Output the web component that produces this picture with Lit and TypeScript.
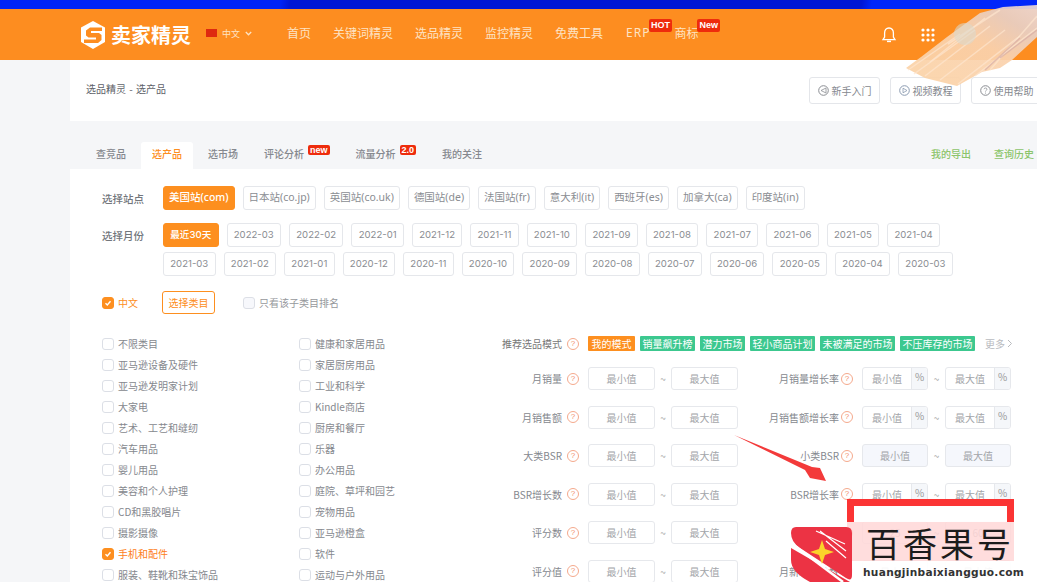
import { LitElement, html, svg, css, nothing } from "lit";
import { customElement } from "lit/decorators.js";

const NAV = ["首页", "关键词精灵", "选品精灵", "监控精灵", "免费工具"];
const TABS = ["查竞品", "选产品", "选市场"];
const SITES = ["美国站(com)", "日本站(co.jp)", "英国站(co.uk)", "德国站(de)", "法国站(fr)", "意大利(it)", "西班牙(es)", "加拿大(ca)", "印度站(in)"];
const MONTHS = ["最近30天", "2022-03", "2022-02", "2022-01", "2021-12", "2021-11", "2021-10", "2021-09", "2021-08", "2021-07", "2021-06", "2021-05", "2021-04", "2021-03", "2021-02", "2021-01", "2020-12", "2020-11", "2020-10", "2020-09", "2020-08", "2020-07", "2020-06", "2020-05", "2020-04", "2020-03"];
const CATS = ["不限类目", "健康和家居用品", "亚马逊设备及硬件", "家居厨房用品", "亚马逊发明家计划", "工业和科学", "大家电", "Kindle商店", "艺术、工艺和缝纫", "厨房和餐厅", "汽车用品", "乐器", "婴儿用品", "办公用品", "美容和个人护理", "庭院、草坪和园艺", "CD和黑胶唱片", "宠物用品", "摄影摄像", "亚马逊橙盒", "手机和配件", "软件", "服装、鞋靴和珠宝饰品", "运动与户外用品"];
const MODES = ["销量飙升榜", "潜力市场", "轻小商品计划", "未被满足的市场", "不压库存的市场"];
type Row = { l: string; r: string; kind: "pct" | "soft" | "plain"; a?: string; b?: string };
const ROWS: Row[] = [
  { l: "月销量", r: "月销量增长率", kind: "pct" },
  { l: "月销售额", r: "月销售额增长率", kind: "pct" },
  { l: "大类BSR", r: "小类BSR", kind: "soft" },
  { l: "BSR增长数", r: "BSR增长率", kind: "pct" },
  { l: "评分数", r: "价格", kind: "plain", a: "25", b: "60" },
  { l: "评分值", r: "月新增评分数", kind: "plain" },
];
const STREAKS = [
  "M908 70 960 34", "M914 74 975 30", "M925 76 990 26", "M940 80 1005 30", "M958 84 1020 36", "M930 62 985 18",
  "M975 76 1037 28", "M990 70 1037 16", "M948 44 1000 10",
];

@customElement("app-root")
export class AppRoot extends LitElement {
  static styles = css`
    :host { display: block; width: 1037px; height: 582px; overflow: hidden; position: relative; background: #f5f6f8;
      font-family: "Noto Sans CJK SC", "Noto Sans", sans-serif; color: #777; font-size: 10px; }
    .strip { height: 9px; background: linear-gradient(100deg, #0024f6 0 27%, #0016d6 28% 60%, #0016d6 83%, #0026fa 84%); }
    .top { height: 51px; background: #fd8d20; display: flex; align-items: center; color: #fde3c4; }
    .logo { display: flex; align-items: center; margin-left: 81px; width: 125px; gap: 6px; color: #fff; font-size: 20px; font-weight: 700; line-height: 1; }
    .lang { display: flex; align-items: center; font-size: 9px; gap: 5px; width: 81px; margin-top: -3px; }
    .flag { width: 11px; height: 8px; background: #de2910; display: block; }
    .nav { display: flex; align-items: center; gap: 22px; font-size: 12px; line-height: 16px; margin-top: -4px; }
    .badged { position: relative; }
    .hot { position: absolute; background: #ee2c0c; color: #fff; font: 700 9px/13px "Liberation Sans", sans-serif; letter-spacing: 0; padding: 0 2px; border-radius: 2px; top: -6px; left: 23px; white-space: nowrap; }
    .erp { font-family: "Noto Sans", sans-serif; letter-spacing: 1px; margin: 0 2px 0 1px; }
    .icons { position: absolute; left: 881px; top: 26px; display: flex; gap: 24px; align-items: center; }
    .head { height: 61px; margin-left: 70px; background: #fff; display: flex; align-items: center; padding-left: 16px; position: relative; color: #5d6168; }
    .crumb { flex: 1; position: relative; top: -2px; word-spacing: 1px; }
    .hbtns { display: flex; gap: 10px; margin-right: -5px; }
    .hbtn { height: 27px; width: 71px; flex: none; box-sizing: border-box; border: 1px solid #e4e6ea; border-radius: 3px; display: flex; align-items: center; justify-content: center; gap: 3px; color: #85888e; }
    .tabs { height: 48px; margin-left: 70px; display: flex; align-items: flex-end; padding-left: 15px; gap: 4px; position: relative; }
    .tab { height: 27px; box-sizing: border-box; padding: 0 11px 5px; display: flex; align-items: center; gap: 4px; color: #85888e; font-weight: 500; border-radius: 3px 3px 0 0; }
    .tab.on { background: #fff; color: #fd8d20; }
    .mini { background: #ee2c0c; color: #fff; font: 700 9px/10px "Liberation Sans", sans-serif; padding: 0 2px; border-radius: 2px; position: relative; top: -3px; }
    .tabs .links { margin-left: auto; display: flex; gap: 23px; height: 27px; box-sizing: border-box; padding: 0 3px 5px 0; align-items: center; color: #8cc56b; font-weight: 500; }
    .panel { margin-left: 70px; background: #fff; padding: 17px 0 0 32px; height: 413px; box-sizing: border-box; }
    .line { display: flex; margin-bottom: 13px; }
    .lab { width: 61px; flex: none; font-size: 10.5px; font-weight: 500; color: #72767c; line-height: 24px; position: relative; top: 1px; }
    .chips { display: flex; flex-wrap: wrap; gap: 5px 8px; width: 800px; }
    .chip { height: 24px; box-sizing: border-box; padding: 0 5px; border: 1px solid #e5e7eb; border-radius: 3px; line-height: 21px; font-size: 10.5px; color: #8a8d92; white-space: nowrap; font-family: "Noto Sans", "Noto Sans CJK SC", sans-serif; }
    .chip.on { background: #fd8f1f; border-color: #fd8f1f; color: #fff; font-weight: 500; }
    .month { padding: 0 6.25px; font-size: 9.6px; font-family: Inter, "Noto Sans CJK SC", sans-serif; }
    .sel { display: flex; align-items: center; height: 23px; margin-top: 15px; }
    .box { width: 12px; height: 12px; box-sizing: border-box; border: 1px solid #dcdfe6; border-radius: 3px; flex: none; display: flex; align-items: center; justify-content: center; background: #fff; }
    .box.on { background: #fd8f1f; border-color: #fd8f1f; }
    .box.soft { background: #f7f8fc; }
    .zh { color: #fd8d20; margin-left: 4px; width: 44px; }
    .pick { height: 23px; width: 53px; box-sizing: border-box; border: 1px solid #fd8f1f; border-radius: 3px; color: #fd8d20; display: flex; align-items: center; justify-content: center; margin-right: 28px; }
    .only { margin-left: 4px; color: #96989c; }
    .lower { display: flex; }
    .cats { width: 388px; flex: none; display: grid; grid-template-columns: 197px 191px; grid-auto-rows: 21px; margin-top: 19px; }
    .cat { display: flex; align-items: center; gap: 4px; white-space: nowrap; color: #85888e; height: 21px; }
    .cat.on { color: #fd7d20; }
    .form { margin-top: 22px; width: 560px; }
    .modes { display: flex; align-items: center; height: 15px; margin-bottom: 16px; }
    .mlabel { width: 72px; text-align: right; color: #777; white-space: nowrap; flex: none; }
    .help { width: 12px; height: 12px; box-sizing: border-box; border: 1px solid #f5a98c; border-radius: 50%; color: #f2916b; font: 8px/10px "Liberation Sans", sans-serif; text-align: center; flex: none; margin: 0 9px 0 5px; }
    .tags { display: flex; gap: 5px; }
    .tag { height: 15px; line-height: 15px; padding: 0 2.5px; background: #3cc88f; color: #fff; border-radius: 1px; font-size: 10px; white-space: nowrap; }
    .tag.on { background: #fd8f1f; padding: 0 3.5px; }
    .more { margin-left: 10px; color: #b9bbbf; display: flex; align-items: center; gap: 2px; white-space: nowrap; }
    .row { display: flex; align-items: center; height: 23px; margin-bottom: 15.5px; }
    .rl { width: 72px; text-align: right; white-space: nowrap; flex: none; color: #85888e; }
    .rl.b { width: 101px; }
    .b + .help { margin: 0 9px 0 2px; }
    .in { width: 67px; height: 23px; box-sizing: border-box; border: 1px solid #e6e8ec; border-radius: 3px; color: #a3a5a9; display: flex; align-items: center; justify-content: center; flex: none; }
    .in.soft { background: #f5f7fc; }
    .in.mid { width: 66px; }
    .combo { width: 66px; height: 23px; box-sizing: border-box; border: 1px solid #e6e8ec; border-radius: 3px; display: flex; flex: none; color: #a3a5a9; overflow: hidden; }
    .combo span { flex: 1; display: flex; align-items: center; justify-content: center; }
    .combo i { width: 15px; flex: none; font-style: normal; background: #f5f7fa; border-left: 1px solid #e6e8ec; text-align: center; line-height: 18px; color: #999; }
    .tilde { width: 16px; text-align: center; flex: none; color: #aaa; }
    .b ~ .tilde { width: 17px; }
    .overlay { position: absolute; left: 0; top: 0; pointer-events: none; }
    .veil { position: absolute; left: 847px; top: 522px; width: 167px; height: 39px; background: rgba(255, 215, 215, 0.86); }
    .glow { position: absolute; left: 854px; top: 506px; width: 153px; height: 16px; background: rgba(255, 255, 255, 0.94); }
    .frame { position: absolute; left: 847px; top: 499px; width: 167px; height: 23px; box-sizing: border-box; border: 7px solid #fb3434; border-bottom: 0; }
    .white { position: absolute; left: 850px; top: 561px; width: 187px; height: 21px; background: rgba(255, 255, 255, 0.92); }
    .wm { position: absolute; left: 866px; top: 523px; font-size: 34px; line-height: 40px; letter-spacing: 3px; color: #1c1c1c; font-weight: 400; white-space: nowrap; }
    .url { position: absolute; left: 863px; top: 565px; font: 700 10.6px/14px "DejaVu Sans", sans-serif; letter-spacing: 0.3px; color: #333; white-space: nowrap; }
  `;

  private help() { return html`<span class="help">?</span>`; }
  private check() {
    return html`<svg width="8" height="8" viewBox="0 0 8 8"><path d="M1.5 4.2 3.3 6 6.5 2.2" fill="none" stroke="#fff" stroke-width="1.4"/></svg>`;
  }
  private combo(t: string) { return html`<div class="combo"><span>${t}</span><i>%</i></div>`; }

  private rightInputs(r: Row) {
    const a = r.a ?? "最小值", b = r.b ?? "最大值";
    if (r.kind === "pct") return html`${this.combo(a)}<span class="tilde">~</span>${this.combo(b)}`;
    const c = r.kind === "soft" ? "in mid soft" : "in mid";
    return html`<div class=${c}>${a}</div><span class="tilde">~</span><div class=${c}>${b}</div>`;
  }

  render() {
    return html`
      <div class="strip"></div>
      <div class="top">
        <div class="logo">
          <svg width="24" height="28" viewBox="0 0 24 28">
            <path d="M12 0 24 6.5V21L12 28 0 21V6.5Z" fill="#fff"/>
            <path d="M21 6.5H9L5 9.5V14.5L7.5 16.5H15V18.5H3V22H17L20.5 19V14L18 12H10V10H21Z" fill="#fd8d20"/>
          </svg>
          <span>卖家精灵</span>
        </div>
        <div class="lang"><span class="flag"></span><span>中文</span>
          <svg width="7" height="5" viewBox="0 0 7 5"><path d="M.8 1 3.5 3.8 6.2 1" fill="none" stroke="#fde3c4" stroke-width="1.3"/></svg>
        </div>
        <nav class="nav">
          ${NAV.map((n) => html`<span>${n}</span>`)}
          <span class="badged erp">ERP<span class="hot">HOT</span></span>
          <span class="badged">商标<span class="hot">New</span></span>
        </nav>
        <div class="icons">
          <svg width="16" height="18" viewBox="0 0 16 18"><path d="M8 2C5 2 3.6 4.4 3.6 7v4L2 13.6h12L12.4 11V7C12.4 4.4 11 2 8 2Z" fill="none" stroke="#fff" stroke-width="1.3"/><path d="M6 15.4h4" stroke="#fff" stroke-width="1.5"/></svg>
          <svg width="14" height="14" viewBox="0 0 14 14" fill="#fff">
            ${[2, 7, 12].map((y) => [2, 7, 12].map((x) => svg`<circle cx=${x} cy=${y} r="1.6" />`))}
          </svg>
        </div>
      </div>
      <div class="head">
        <div class="crumb">选品精灵 - 选产品</div>
        <div class="hbtns">
          <div class="hbtn"><svg width="11" height="11" viewBox="0 0 11 11"><circle cx="5.5" cy="5.5" r="4.8" fill="none" stroke="#8a8d92"/><path d="M8 3 3 5.5 8 8Z" fill="none" stroke="#8a8d92" stroke-width=".8"/></svg>新手入门</div>
          <div class="hbtn"><svg width="11" height="11" viewBox="0 0 11 11"><circle cx="5.5" cy="5.5" r="4.8" fill="none" stroke="#8a9ab0"/><path d="M4 3.2 8 5.5 4 7.8Z" fill="none" stroke="#8a9ab0" stroke-width=".8"/></svg>视频教程</div>
          <div class="hbtn"><svg width="11" height="11" viewBox="0 0 11 11"><circle cx="5.5" cy="5.5" r="4.8" fill="none" stroke="#8a8d92"/><path d="M4 4.2C4 2.6 7 2.6 7 4.2 7 5.3 5.5 5.3 5.5 6.5M5.5 7.6v1" fill="none" stroke="#8a8d92" stroke-width=".8"/></svg>使用帮助</div>
        </div>
      </div>
      <div class="tabs">
        ${TABS.map((t, i) => html`<div class="tab ${i === 1 ? "on" : ""}">${t}</div>`)}
        <div class="tab">评论分析<span class="mini">new</span></div>
        <div class="tab">流量分析<span class="mini">2.0</span></div>
        <div class="tab">我的关注</div>
        <div class="links"><span>我的导出</span><span>查询历史</span></div>
      </div>
      <section class="panel">
        <div class="line"><div class="lab">选择站点</div>
          <div class="chips">${SITES.map((s, i) => html`<div class="chip ${i === 0 ? "on" : ""}">${s}</div>`)}</div>
        </div>
        <div class="line"><div class="lab">选择月份</div>
          <div class="chips">${MONTHS.map((s, i) => html`<div class="chip month ${i === 0 ? "on" : ""}">${s}</div>`)}</div>
        </div>
        <div class="sel">
          <span class="box on">${this.check()}</span><span class="zh">中文</span>
          <div class="pick">选择类目</div>
          <span class="box soft"></span><span class="only">只看该子类目排名</span>
        </div>
        <div class="lower">
          <div class="cats">
            ${CATS.map((c) => {
              const on = c === "手机和配件";
              return html`<div class="cat ${on ? "on" : ""}"><span class="box ${on ? "on" : ""}">${on ? this.check() : nothing}</span>${c}</div>`;
            })}
          </div>
          <div class="form">
            <div class="modes">
              <span class="mlabel">推荐选品模式</span>${this.help()}
              <div class="tags"><span class="tag on">我的模式</span>${MODES.map((m) => html`<span class="tag">${m}</span>`)}</div>
              <span class="more">更多<svg width="6" height="9" viewBox="0 0 6 9"><path d="M1 1 4.5 4.5 1 8" fill="none" stroke="#b9bbbf"/></svg></span>
            </div>
            ${ROWS.map((r) => html`
              <div class="row">
                <span class="rl">${r.l}</span>${this.help()}
                <div class="in">最小值</div><span class="tilde">~</span><div class="in">最大值</div>
                <span class="rl b">${r.r}</span>${this.help()}
                ${this.rightInputs(r)}
              </div>`)}
          </div>
        </div>
      </section>

      <svg class="overlay" width="1037" height="582" viewBox="0 0 1037 582">
        <defs>
          <linearGradient id="brush" x1="0" y1="1" x2="1" y2="0">
            <stop offset="0" stop-color="#fbd3a6"/><stop offset=".55" stop-color="#fad2ae"/><stop offset=".8" stop-color="#e8cfc4"/><stop offset="1" stop-color="#ecd8d4"/>
          </linearGradient>
        </defs>
        <path d="M906 68 921 57 947 37 980 13 1003 7 1037 5V37L1012 60 1000 68 982 72 957 86 925 78Z" fill="url(#brush)" opacity=".93"/>
        ${STREAKS.map((d) => svg`<path d=${d} stroke="#fde6cf" stroke-width="1.5" opacity=".7" fill="none"/>`)}
        <path d="M1037 30 1000 58M1020 38 985 70" stroke="#d9aea4" stroke-width="1.5" opacity=".7"/>
        <circle cx="965" cy="34" r="11" fill="#dcd8cc" opacity=".6"/>
        <path d="M734 435 812 467 820 468 826 481 810 478 805 470Z" fill="#f33a3a"/>
      </svg>

      <div class="glow"></div>
      <div class="veil"></div>
      <div class="frame"></div>
      <div class="white"></div>
      <svg class="overlay" width="1037" height="582" viewBox="0 0 1037 582">
        <path d="M796 527H846Q852 527 852 533V575Q852 582 846 578L800 548Q791 542 791 533 791 527 796 527Z" fill="#ec3344"/>
        <path d="M791 548 850 582H810Q791 572 791 560Z" fill="#ec3344"/>
        <path d="M791 543 843 582" stroke="#fff" stroke-width="2.5"/>
        <path d="M822 540 825 549 834 552 825 555 822 564 819 555 810 552 819 549Z" fill="#fbd32a"/>
        <path d="M816 531 845 544M820 531 846 551M826 541 846 558" stroke="#fff" stroke-width="1.2"/>
      </svg>
      <div class="wm">百香果号</div>
      <div class="url">huangjinbaixiangguo.com</div>
    `;
  }
}
